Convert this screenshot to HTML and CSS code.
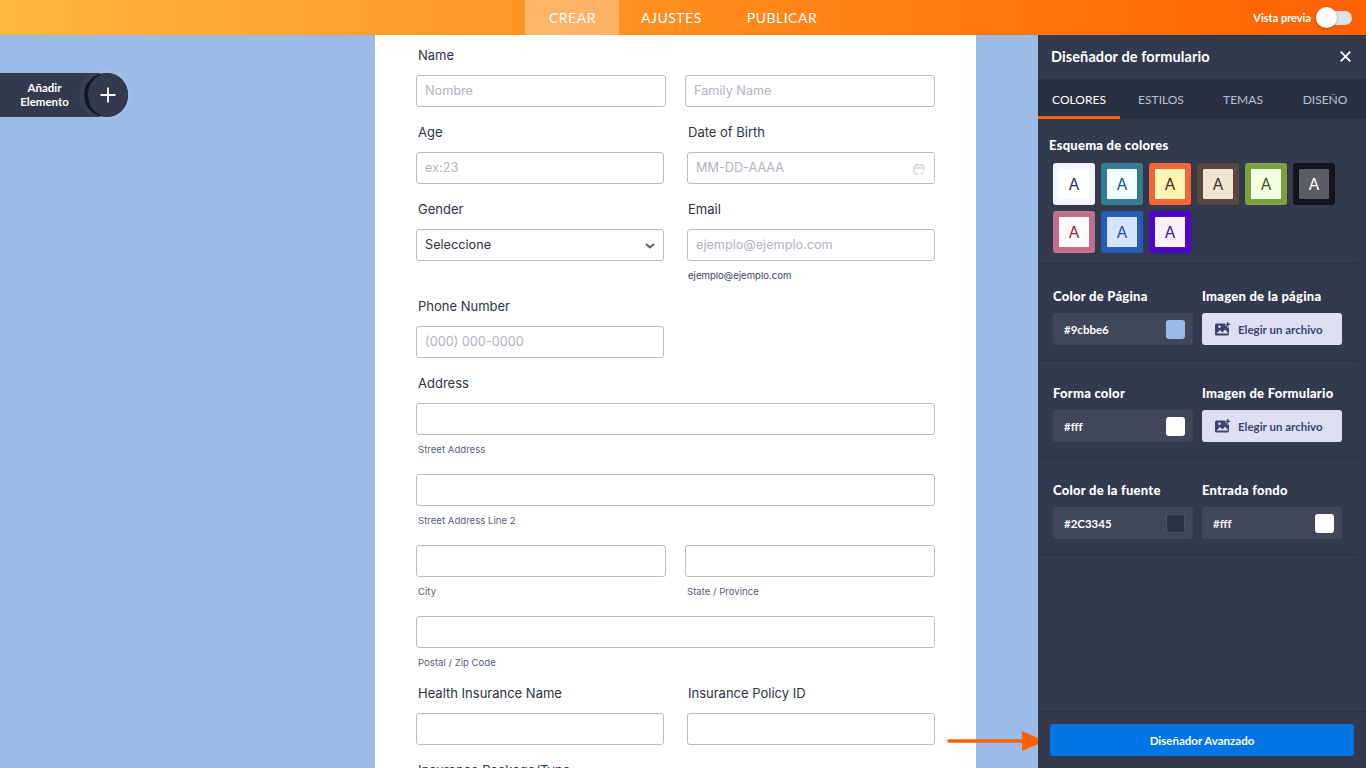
FILE: index.html
```html
<!DOCTYPE html>
<html lang="es">
<head>
<meta charset="utf-8">
<title>Diseñador de formulario</title>
<link rel="stylesheet" href="styles.css">
</head>
<body>
<header class="topbar">
  <nav class="topnav">
    <a class="topnav-item is-active">CREAR</a>
    <a class="topnav-item">AJUSTES</a>
    <a class="topnav-item">PUBLICAR</a>
  </nav>
  <div class="preview">
    <span class="preview-label">Vista previa</span>
    <span class="toggle"><span class="toggle-thumb"></span></span>
  </div>
</header>
<div class="workspace">
  <main class="canvas">
    <div class="add-element">
      <span class="add-label">Añadir<br>Elemento</span>
      <span class="add-circle">
        <svg width="16" height="16" viewBox="0 0 16 16"><path d="M8 .5v15M.5 8h15" stroke="#fff" stroke-width="1.8" fill="none"/></svg>
      </span>
    </div>
    <form class="form-card">
      <div class="row row-wide">
        <div class="field"><label class="label">Name</label><div class="input ph">Nombre</div></div>
        <div class="field"><label class="label spacer"></label><div class="input ph">Family Name</div></div>
      </div>
      <div class="row">
        <div class="field"><label class="label">Age</label><div class="input ph">ex:23</div></div>
        <div class="field"><label class="label">Date of Birth</label>
          <div class="input ph has-icon">MM-DD-AAAA
            <svg class="cal" width="12" height="12" viewBox="0 0 12 12" fill="none" stroke="#c4c6d2" stroke-width="1"><path d="M5 11H2.500A1.500 1.500 0 0 1 1 9.500v-6A1.500 1.500 0 0 1 2.500 2h7A1.500 1.500 0 0 1 11 3.500V7M1 5h10M3.500.5v3M8.500.5v3M7.500 10l1 1 2.500-2"/></svg>
          </div>
        </div>
      </div>
      <div class="row">
        <div class="field"><label class="label">Gender</label>
          <div class="input value has-icon">Seleccione
            <svg class="chev" width="10" height="6" viewBox="0 0 10 6" fill="none" stroke="#57607a" stroke-width="2"><path d="M1 1l4 3.500L9 1"/></svg>
          </div>
        </div>
        <div class="field"><label class="label">Email</label><div class="input ph">ejemplo@ejemplo.com</div><div class="sub">ejemplo@ejemplo.com</div></div>
      </div>
      <div class="row">
        <div class="field"><label class="label">Phone Number</label><div class="input ph">(000) 000-0000</div></div>
        <div class="field"></div>
      </div>
      <div class="row row-addr">
        <div class="field"><label class="label">Address</label><div class="input"></div><div class="sub sub-addr">Street Address</div>
          <div class="input"></div><div class="sub sub-addr">Street Address Line 2</div>
        </div>
      </div>
      <div class="row row-wide row-addr">
        <div class="field"><div class="input"></div><div class="sub sub-addr">City</div></div>
        <div class="field"><div class="input"></div><div class="sub sub-addr">State / Province</div></div>
      </div>
      <div class="row row-addr">
        <div class="field"><div class="input"></div><div class="sub sub-addr sub-last">Postal / Zip Code</div></div>
      </div>
      <div class="row">
        <div class="field"><label class="label">Health Insurance Name</label><div class="input"></div></div>
        <div class="field"><label class="label">Insurance Policy ID</label><div class="input"></div></div>
      </div>
      <div class="row">
        <div class="field"><label class="label">Insurance Package/Type</label></div>
      </div>
    </form>
    <svg class="arrow" width="98" height="20" viewBox="0 0 98 20"><path d="M2 10h76" stroke="#ff6100" stroke-width="3.500" stroke-linecap="round"/><path d="M75 0l23 10-23 10z" fill="#ff6100"/></svg>
  </main>
  <aside class="panel">
    <div class="panel-head">
      <h2 class="panel-title">Diseñador de formulario</h2>
      <svg width="11" height="11" viewBox="0 0 11 11"><path d="M.7.7l9.600 9.600M10.300.7L.7 10.300" stroke="#fff" stroke-width="1.700"/></svg>
    </div>
    <div class="tabs">
      <span class="tab is-active">COLORES</span>
      <span class="tab">ESTILOS</span>
      <span class="tab">TEMAS</span>
      <span class="tab">DISEÑO</span>
    </div>
    <section class="schemes">
      <h3 class="schemes-title">Esquema de colores</h3>
      <div class="swatches">
        <span class="swatch s1"><span>A</span></span>
        <span class="swatch s2"><span>A</span></span>
        <span class="swatch s3"><span>A</span></span>
        <span class="swatch s4"><span>A</span></span>
        <span class="swatch s5"><span>A</span></span>
        <span class="swatch s6"><span>A</span></span>
        <span class="swatch s7"><span>A</span></span>
        <span class="swatch s8"><span>A</span></span>
        <span class="swatch s9"><span>A</span></span>
      </div>
    </section>
    <section class="prop-row">
      <div class="prop"><div class="prop-label">Color de Página</div><div class="color-box">#9cbbe6<i class="chip c-page"></i></div></div>
      <div class="prop"><div class="prop-label">Imagen de la página</div>
        <div class="file-btn"><svg width="16" height="14" viewBox="0 0 16 14"><path d="M1.500 1.500h8.500v2h2v2h2v6.500a1.500 1.500 0 0 1-1.500 1.500h-11a1.500 1.500 0 0 1-1.500-1.500v-9a1.500 1.500 0 0 1 1.500-1.500z" fill="#3c4370"/><circle cx="4.500" cy="4.800" r="1.300" fill="#dde0f2"/><path d="M1.500 11.500l3.500-3.500 2.500 2.500 2.500-3 3.500 4z" fill="#dde0f2"/><path d="M12.800 0v4.600M10.500 2.300h4.600" stroke="#3c4370" stroke-width="1.300"/></svg>Elegir un archivo</div>
      </div>
    </section>
    <section class="prop-row">
      <div class="prop"><div class="prop-label">Forma color</div><div class="color-box">#fff<i class="chip c-white"></i></div></div>
      <div class="prop"><div class="prop-label">Imagen de Formulario</div>
        <div class="file-btn"><svg width="16" height="14" viewBox="0 0 16 14"><path d="M1.500 1.500h8.500v2h2v2h2v6.500a1.500 1.500 0 0 1-1.500 1.500h-11a1.500 1.500 0 0 1-1.500-1.500v-9a1.500 1.500 0 0 1 1.500-1.500z" fill="#3c4370"/><circle cx="4.500" cy="4.800" r="1.300" fill="#dde0f2"/><path d="M1.500 11.500l3.500-3.500 2.500 2.500 2.500-3 3.500 4z" fill="#dde0f2"/><path d="M12.800 0v4.600M10.500 2.300h4.600" stroke="#3c4370" stroke-width="1.300"/></svg>Elegir un archivo</div>
      </div>
    </section>
    <section class="prop-row">
      <div class="prop"><div class="prop-label">Color de la fuente</div><div class="color-box">#2C3345<i class="chip c-font"></i></div></div>
      <div class="prop"><div class="prop-label">Entrada fondo</div><div class="color-box">#fff<i class="chip c-white"></i></div></div>
    </section>
    <div class="panel-foot">
      <button class="advanced" type="button">Diseñador Avanzado</button>
    </div>
  </aside>
</div>
</body>
</html>
```
FILE: styles.css
```css
* { box-sizing: border-box; }
html, body { margin: 0; height: 768px; overflow: hidden; }
body { display: flex; flex-direction: column; font-family: "Inter", sans-serif; color: #2c3345; background: #9cbbe6; }

.topbar { height: 35px; flex: none; display: flex; align-items: stretch; justify-content: space-between; background: linear-gradient(90deg, #ffb83f 0%, #ff6100 100%); color: #fff; }
.topnav { display: flex; margin-left: 525px; }
.topnav-item { display: flex; align-items: center; padding: 0 23px 0 22px; font: 400 14px "Lato", sans-serif; letter-spacing: .5px; }
.topnav-item.is-active { width: 94px; padding-left: 24px; padding-right: 0; background: rgba(255,255,255,.3); }
.preview { display: flex; align-items: center; padding-right: 14px; }
.preview-label { font: 700 11px "Lato", sans-serif; margin-right: 5px; }
.toggle { position: relative; display: block; width: 36px; height: 14px; border-radius: 7px; background: #dfe1ea; }
.toggle-thumb { position: absolute; left: 0; top: -3.500px; width: 21px; height: 21px; border-radius: 50%; background: #fff; box-shadow: 0 1px 3px rgba(0,0,0,.3); }

.workspace { flex: 1; min-height: 0; display: flex; }
.canvas { position: relative; flex: 1; min-width: 0; overflow: hidden; }
.panel { width: 328px; flex: none; display: flex; flex-direction: column; background: #343a4d; color: #fff; font-family: "Lato", sans-serif; }

.add-element { position: absolute; left: 0; top: 38px; height: 44px; width: 129px; display: flex; align-items: center; background: linear-gradient(90deg, #343a4d 100px, transparent 100px); }
.add-label { width: 89px; text-align: center; font: 700 11.500px/14px "Lato", sans-serif; color: #fff; }
.add-circle { position: absolute; left: 84px; top: 0; width: 44px; height: 44px; display: flex; align-items: center; justify-content: center; border-radius: 50%; background: #14161f; box-shadow: 0 0 0 5px rgba(255,255,255,.03); }
.add-circle::before { content: ""; position: absolute; left: 4px; top: 0; width: 40px; height: 44px; border-radius: 50%; background: #343a4d; }
.add-circle svg { position: relative; left: 2px; }

.form-card { margin-left: 375px; width: 601px; height: 733px; background: #fff; padding: 12px 41px 0; overflow: hidden; }
.row { display: flex; gap: 23px; margin-bottom: 17px; }
.row-wide { gap: 19px; }
.row-addr { margin-bottom: 0; }
.field { flex: 1 1 0; min-width: 0; }
.label { display: block; height: 16px; margin: 0 2px 12px; font-size: 13px; line-height: 16px; color: #2c3345; }
.row:not(.row-wide) .field + .field .label,
.row:not(.row-wide) .field + .field .sub { margin-left: 1px; }
.input { position: relative; height: 32px; display: flex; align-items: center; padding: 0 8px 2px; border: 1px solid #b8bdc9; border-radius: 3px; background: #fff; font-size: 12.700px; }
.ph { color: #b3b5c1; }
.value { color: #2c3345; }
.cal { position: absolute; right: 9px; top: 10px; }
.chev { position: absolute; right: 8px; top: 13px; }
.sub { margin: 7px 2px 0; height: 13px; font-size: 9.600px; line-height: 16px; color: #3e4559; }
.sub-addr { color: #57607a; height: 15px; margin: 7px 2px 17px; }
.sub-last { margin-bottom: 15px; }

.arrow { position: absolute; left: 947px; top: 696px; z-index: 2; }

.panel-head { height: 44px; flex: none; display: flex; align-items: center; justify-content: space-between; padding: 0 15px 2px 13px; }
.panel-title { margin: 0; font: 700 14.500px "Lato", sans-serif; letter-spacing: .1px; }
.tabs { height: 40px; flex: none; display: flex; background: #2b3040; }
.tab { width: 82px; display: flex; align-items: center; justify-content: center; font: 400 12px "Lato", sans-serif; color: #b6c0d6; }
.tab.is-active { color: #fff; border-bottom: 3px solid #ff6100; padding-top: 3px; }

.schemes { height: 145px; flex: none; margin-right: 9px; padding: 19px 0 0 11px; border-bottom: 1px solid #2b3040; }
.schemes-title { margin: 0 0 10px; font: 900 13px/15px "Lato", sans-serif; letter-spacing: .25px; }
.swatches { display: grid; grid-template-columns: repeat(6, 42px); gap: 6px; margin-left: 4px; }
.swatch { width: 42px; height: 42px; padding: 6px; border-radius: 3px; background: var(--o); }
.swatch span { display: flex; align-items: center; justify-content: center; width: 30px; height: 30px; border-radius: 1px; background: var(--i); color: var(--t); font: 400 16px "Inter", sans-serif; }
.s1 { --o: #f3f6fe; --i: #fff; --t: #2c3345; }
.s2 { --o: #367b96; --i: #f5feff; --t: #0e5c7b; }
.s3 { --o: #f26539; --i: #fff6b3; --t: #5b2413; }
.s4 { --o: #57473e; --i: #eee6d3; --t: #3e3228; }
.s5 { --o: #7ea03e; --i: #f4ffe3; --t: #3d5a1a; }
.s6 { --o: #12141e; --i: #5a5c66; --t: #fff; }
.s7 { --o: #c26f8d; --i: #fffafb; --t: #8f1f4b; }
.s8 { --o: #2260b8; --i: #d5e5fd; --t: #1d4f9a; }
.s9 { --o: #4d06c9; --i: #f6f0ff; --t: #3a1a8c; }

.prop-row { height: 97px; flex: none; display: flex; gap: 9px; margin-right: 9px; padding: 25px 15px 0; border-bottom: 1px solid #2b3040; }
.prop { width: 140px; }
.prop-label { font: 900 13px/15px "Lato", sans-serif; letter-spacing: .25px; height: 15px; margin-bottom: 9px; white-space: nowrap; }
.color-box { display: flex; align-items: center; justify-content: space-between; height: 32px; padding: 0 8px 0 11px; border-radius: 3px; background: #414659; font: 700 11.500px "Lato", sans-serif; }
.chip { width: 19px; height: 19px; border-radius: 3px; }
.c-page { background: #9cbbe6; }
.c-white { background: #fff; }
.c-font { background: #2c3345; border: 1px solid #4c5266; }
.file-btn { display: flex; align-items: center; gap: 7px; height: 32px; padding-left: 13px; border-radius: 3px; background: #dde0f2; color: #3c4370; font: 700 11.500px "Lato", sans-serif; }

.panel-foot { margin-top: auto; height: 57px; flex: none; padding: 12px; border-top: 1px solid #2b3040; }
.advanced { display: block; width: 100%; height: 32px; border: 0; border-radius: 3px; background: #0075e3; color: #fff; font: 700 11.500px "Lato", sans-serif; }
```
